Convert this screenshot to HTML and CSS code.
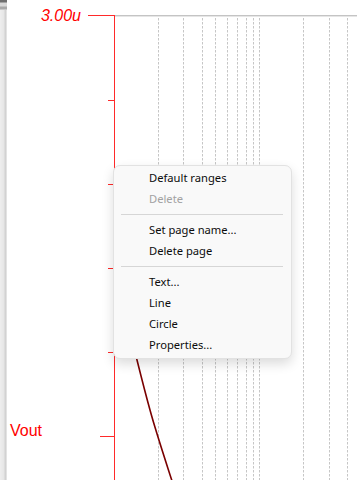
FILE: index.html
```html
<!DOCTYPE html>
<html lang="en">
<head>
  <meta charset="UTF-8">
  <meta name="viewport" content="width=device-width, initial-scale=1">
  <title>Plot</title>
  <link rel="stylesheet" href="styles.css">
</head>
<body>

<div class="window">
  <div class="scrollbar">
    <div class="scroll-thumb"></div>
  </div>

  <div class="plot">
    <svg class="chart" width="350" height="480" viewBox="7 0 350 480">
      <!-- top border of the plot area -->
      <line class="frame" x1="114" y1="15.5" x2="357" y2="15.5"/>
      <line class="frame-soft" x1="114" y1="16.5" x2="357" y2="16.5"/>

      <!-- log grid -->
      <g class="grid">
        <line x1="158.5" y1="18" x2="158.5" y2="480"/>
        <line x1="183.5" y1="18" x2="183.5" y2="480"/>
        <line x1="202.5" y1="18" x2="202.5" y2="480"/>
        <line x1="215.5" y1="18" x2="215.5" y2="480"/>
        <line x1="227.5" y1="18" x2="227.5" y2="480"/>
        <line x1="237.5" y1="18" x2="237.5" y2="480"/>
        <line x1="246.5" y1="18" x2="246.5" y2="480"/>
        <line x1="253.5" y1="18" x2="253.5" y2="480"/>
        <line x1="259.5" y1="18" x2="259.5" y2="480"/>
        <line x1="303.5" y1="18" x2="303.5" y2="480"/>
        <line x1="329.5" y1="18" x2="329.5" y2="480"/>
        <line x1="347.5" y1="18" x2="347.5" y2="480"/>
      </g>

      <!-- y axis -->
      <g class="axis">
        <line x1="114.5" y1="15" x2="114.5" y2="480"/>
        <line x1="88" y1="15.5" x2="114" y2="15.5"/>
        <line x1="108" y1="100.5" x2="114" y2="100.5"/>
        <line x1="108" y1="184.5" x2="114" y2="184.5"/>
        <line x1="108" y1="268.5" x2="114" y2="268.5"/>
        <line x1="108" y1="352.5" x2="114" y2="352.5"/>
        <line x1="100" y1="436.5" x2="114" y2="436.5"/>
      </g>

      <text class="label value" x="81" y="21" text-anchor="end">3.00u</text>
      <text class="label" x="10" y="436">Vout</text>

      <path class="trace" d="M128 320 C131 335, 134 348, 137 360 C141 376, 145 392, 150 410 C156 432, 164 456, 173 484"/>
    </svg>
  </div>

  <ul class="context-menu">
    <li>Default ranges</li>
    <li class="disabled">Delete</li>
    <li class="separator"></li>
    <li>Set page name...</li>
    <li>Delete page</li>
    <li class="separator"></li>
    <li>Text...</li>
    <li>Line</li>
    <li>Circle</li>
    <li>Properties...</li>
  </ul>
</div>

</body>
</html>
```

FILE: styles.css
```css
* { box-sizing: border-box; }
body {
  margin: 0;
  background: #fff;
  font-family: "Liberation Sans", Arial, sans-serif;
  overflow: hidden;
}
.window {
  position: relative;
  display: flex;
  width: 357px;
  height: 480px;
  background: #fff;
}
.scrollbar {
  width: 7px;
  height: 100%;
  background: linear-gradient(to right, #eeeeee 0, #e6e6e6 4px, #d2d2d2 5px, #d2d2d2 6px, #f4f4f4 7px);
}
.scroll-thumb {
  height: 10px;
  background: linear-gradient(to bottom, #6e6e6e 0, #6e6e6e 2px, #d8d8d8 3px, #d8d8d8 6px, #a8a8a8 7px, #a8a8a8 9px, #e6e6e6 10px);
}
.plot {
  flex: 1;
}
.chart {
  display: block;
}
.frame {
  stroke: #c4c4c4;
  stroke-width: 1;
}
.frame-soft {
  stroke: #e6e6e6;
  stroke-width: 1;
}
.grid line {
  stroke: #c6c6c6;
  stroke-width: 1;
  stroke-dasharray: 2.5 1.5;
}
.axis line {
  stroke: #ff2a2a;
  stroke-width: 1;
}
.label {
  fill: #f00;
  font-family: "Liberation Sans", Arial, sans-serif;
  font-size: 16px;
}
.label.value {
  font-style: italic;
}
.trace {
  fill: none;
  stroke: #7a0000;
  stroke-width: 1.6;
}
.context-menu {
  position: absolute;
  left: 113px;
  top: 165px;
  width: 179px;
  margin: 0;
  padding: 2px 0;
  list-style: none;
  background: #f9f9f9;
  border: 1px solid #e2e2e2;
  border-radius: 7px;
  box-shadow: 0 5px 12px rgba(0, 0, 0, 0.14);
  font-family: "Noto Sans", "Open Sans", sans-serif;
  font-size: 11.2px;
  color: #0c0c0c;
}
.context-menu li {
  height: 21px;
  line-height: 20px;
  padding-left: 35px;
  white-space: nowrap;
}
.context-menu li.disabled {
  color: #a2a2a2;
}
.context-menu li.separator {
  height: 10px;
  padding: 4px 0 0;
  margin: 0 8px 0 7px;
}
.context-menu li.separator::after {
  content: "";
  display: block;
  height: 1px;
  background: #d6d6d6;
}
```
